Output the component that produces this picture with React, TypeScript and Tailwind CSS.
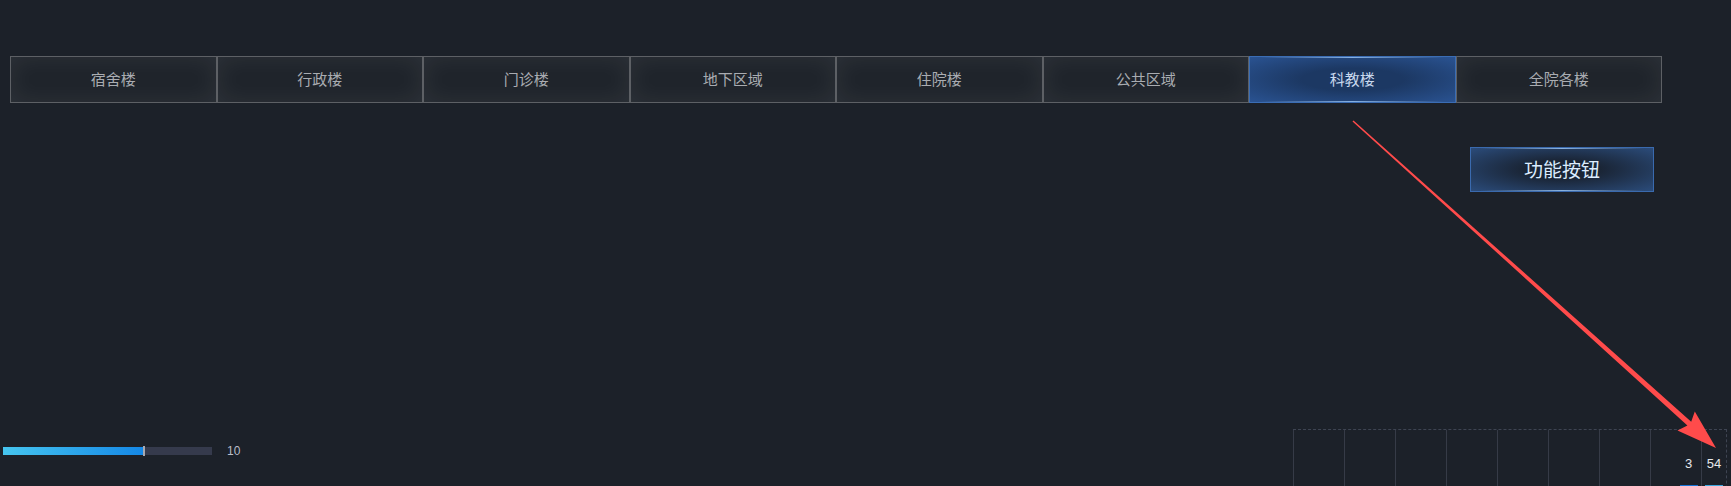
import React from "react";

const tabs = ["宿舍楼", "行政楼", "门诊楼", "地下区域", "住院楼", "公共区域", "科教楼", "全院各楼"];
const active = 6;

// chart columns, only the last two carry values
const cols = [
  { w: "w-[51px]" },
  { w: "w-[51px]" },
  { w: "w-[51px]" },
  { w: "w-[51px]" },
  { w: "w-[51px]" },
  { w: "w-[51px]" },
  { w: "w-[51px]" },
  { w: "w-[51px]", value: "3", bar: "bg-[#1674d8]" },
  { w: "w-[25px]", value: "54", bar: "bg-[#3ba6de]" },
];

function Tab({ label, on }: { label: string; on: boolean }) {
  if (on) {
    return (
      <div className="flex h-[47px] w-[206.5px] flex-col border border-[#3b6db4] bg-[radial-gradient(ellipse_at_center,#1c3863_35%,#2a5392_100%)]">
        <div className="h-px bg-[linear-gradient(90deg,transparent_5%,#86b0e2_50%,transparent_95%)]" />
        <div className="flex flex-1 items-center justify-center text-[15px] text-[#c9d9ee]">{label}</div>
        <div className="h-px bg-[linear-gradient(90deg,transparent_5%,#86b0e2_50%,transparent_95%)]" />
      </div>
    );
  }
  return (
    <div className="flex h-[47px] w-[206.5px] items-center justify-center border border-[#5d6065] bg-[#1f242b] text-[15px] text-[#a9acb1] shadow-[inset_0_0_24px_rgba(255,255,255,0.07)]">
      {label}
    </div>
  );
}

export default function App() {
  return (
    <div className="relative h-[486px] w-full overflow-hidden bg-[#1c2129] font-['Microsoft_YaHei','Noto_Sans_CJK_SC',sans-serif]">
      <div className="flex pl-[10px] pt-[56px]">
        {tabs.map((t, i) => (
          <Tab key={t} label={t} on={i === active} />
        ))}
      </div>

      <div className="flex justify-end pr-[77px] pt-[44px]">
        <div className="flex h-[45px] w-[184px] flex-col border border-[#3a6aae] bg-[radial-gradient(ellipse_at_center,#1a2536_30%,#2b4c7b_100%)]">
          <div className="h-px bg-[linear-gradient(90deg,transparent_5%,#8ab2df_50%,transparent_95%)]" />
          <div className="flex flex-1 items-center justify-center text-[19px] text-[#dcedff]">功能按钮</div>
          <div className="h-px bg-[linear-gradient(90deg,transparent_5%,#8ab2df_50%,transparent_95%)]" />
        </div>
      </div>

      <div className="mt-[237px] flex items-start justify-between pr-[4px]">
        <div className="flex items-center gap-[15px] pl-[3px] pt-[13px]">
          <div className="flex h-[8px] w-[209px] items-center bg-[#353a4c]">
            <div className="h-full w-[140px] bg-[linear-gradient(90deg,#46c5ef,#1588e6)]" />
            <div className="h-[10px] w-[2px] bg-[#a8a9b0]" />
          </div>
          <span className="text-[12px] text-[#b9bdc8] font-['Liberation_Sans',sans-serif]">10</span>
        </div>

        <div className="flex h-[70px] border-t border-r border-dashed border-[#3e4452]">
          {cols.map((c, i) => (
            <div key={i} className={`flex justify-end border-l border-[#363b47] ${c.w}`}>
              {c.value && (
                <div className="flex w-[25px] flex-col items-center pt-[26px]">
                  <span className="text-[13px] leading-[16px] text-[#e6e8ec] font-['Liberation_Sans',sans-serif]">{c.value}</span>
                  <div className={`mt-[13px] h-[10px] w-[18px] ${c.bar}`} />
                </div>
              )}
            </div>
          ))}
        </div>
      </div>

      <svg className="pointer-events-none absolute inset-0" width="1731" height="486">
        <polygon
          fill="#ff4b4b"
          points="1352.5,121.6 1687.4,425.5 1677.5,430.5 1716,448 1694.8,411.5 1691.2,421.8 1353.5,120.4"
        />
      </svg>
    </div>
  );
}
